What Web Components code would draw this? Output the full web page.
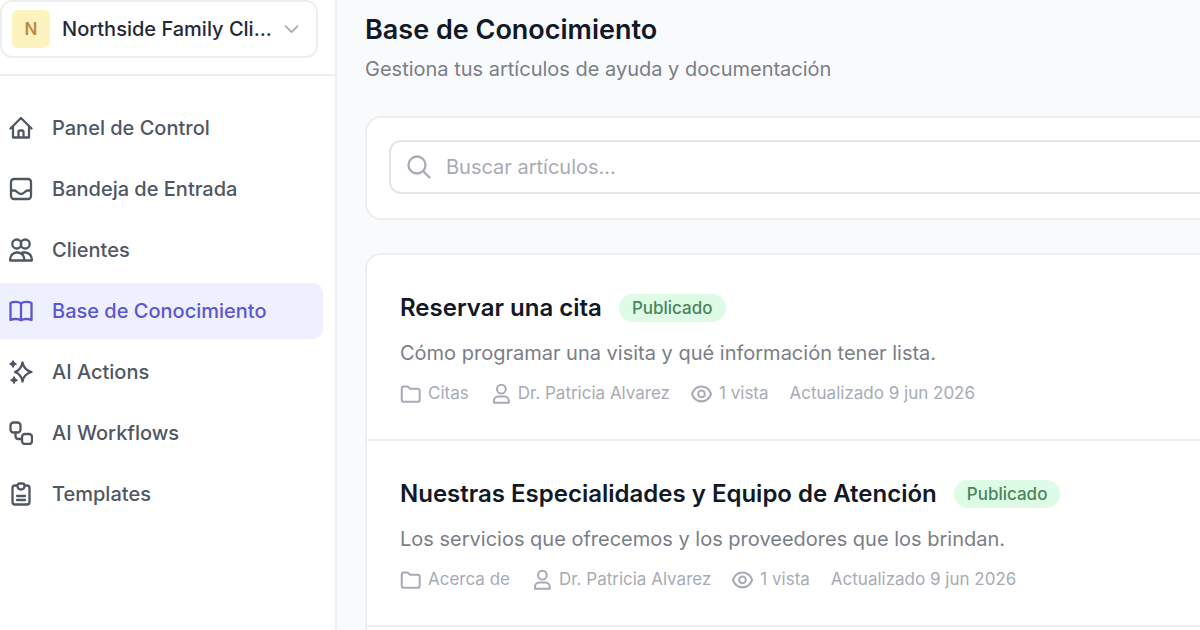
<!DOCTYPE html>
<html lang="es">
<head>
<meta charset="utf-8">
<meta name="viewport" content="width=device-width, initial-scale=1">
<title>Base de Conocimiento</title>
<style>
  html, body { margin: 0; height: 100%; }
  body {
    --line: #eceef1;
    --ink: #111827;
    --body: #4f5763;
    --muted: #7a7e87;
    --faint: #a8abb5;
    --accent: #5d57cf;
    --accent-soft: #eef0ff;
    font-family: Inter, "Liberation Sans", sans-serif;
    font-size: 20px;
    line-height: 28px;
    color: var(--ink);
    background: #f8fafc;
    overflow: hidden;
  }
</style>
</head>
<body>
<app-shell>
  <side-bar slot="side">
    <workspace-switcher slot="head" initial="N">Northside Family Cli...</workspace-switcher>
    <nav-item icon="home">Panel de Control</nav-item>
    <nav-item icon="inbox">Bandeja de Entrada</nav-item>
    <nav-item icon="users">Clientes</nav-item>
    <nav-item icon="book" active>Base de Conocimiento</nav-item>
    <nav-item icon="sparkles">AI Actions</nav-item>
    <nav-item icon="flow">AI Workflows</nav-item>
    <nav-item icon="clipboard">Templates</nav-item>
  </side-bar>
  <page-header>
    Base de Conocimiento
    <span slot="subtitle">Gestiona tus artículos de ayuda y documentación</span>
  </page-header>
  <search-panel placeholder="Buscar artículos..."></search-panel>
  <article-list>
    <article-row category="Citas" author="Dr. Patricia Alvarez" views="1 vista" updated="Actualizado 9 jun 2026">
      <span slot="title">Reservar una cita</span>
      <status-badge slot="status">Publicado</status-badge>
      Cómo programar una visita y qué información tener lista.
    </article-row>
    <article-row category="Acerca de" author="Dr. Patricia Alvarez" views="1 vista" updated="Actualizado 9 jun 2026">
      <span slot="title">Nuestras Especialidades y Equipo de Atención</span>
      <status-badge slot="status">Publicado</status-badge>
      Los servicios que ofrecemos y los proveedores que los brindan.
    </article-row>
  </article-list>
</app-shell>

<script>
const ICONS = {
  home: '<path d="M1.500 12.500 12 2l10.500 10.500M4 10.500v11h16v-11M9.500 21.500V16q0-1.500 1.500-1.500h2q1.500 0 1.500 1.500v5.500"/>',
  inbox: '<rect x="2" y="2" width="20" height="20" rx="3"/><path d="M2 13.500h3.500c2.500 0 3 3.500 6.500 3.500s4-3.500 6.500-3.500H22"/>',
  users: '<circle cx="7.800" cy="6" r="4.500"/><circle cx="16.200" cy="6" r="4.500"/><path d="M1.200 22.500v-1.500c0-3 2.800-6.500 6.300-6.500h1.500c3.500 0 6.300 3.500 6.300 6.500v1.500zM13.500 14.500h3c3.500 0 6.300 3.500 6.300 6.500v1.500h-7.500"/>',
  book: '<path d="M12 4.500C9.500 2.500 4.500 2.500 1.500 4v17c3-1.500 8-1.300 10.500.3 2.500-1.600 7.500-1.800 10.500-.3V4C19.500 2.500 14.500 2.500 12 4.500zV21"/>',
  sparkles: '<path d="M13.500 2.500c1 5.500 3.500 8 9 9.500-5.500 1.500-8 4-9 9.500-1-5.500-3.500-8-7.500-9.500 4-1.500 6.500-4 7.500-9.500z"/><path fill="currentColor" stroke-width="1.500" d="M4 1c.4 2 1 2.600 3 3-2 .4-2.600 1-3 3-.4-2-1-2.600-3-3 2-.4 2.600-1 3-3zM5 17c.4 2.200 1 2.800 3 3.200-2 .4-2.600 1-3 3-.4-2-1-2.600-3-3 2-.4 2.600-1 3-3.200z"/>',
  flow: '<rect x="1.500" y="1.500" width="10" height="10" rx="3"/><rect x="13" y="13" width="10" height="10" rx="3"/><path d="M6.500 11.500V15q0 3 3 3H13"/>',
  clipboard: '<path d="M8 3.500H6q-2.500 0-2.500 2.500v14q0 2.500 2.500 2.500h12q2.500 0 2.500-2.500V6q0-2.500-2.500-2.500h-2"/><path d="M8.500 3.500q0-2 2-2h3q2 0 2 2c0 2-1 4-3.500 4s-3.500-2-3.500-4zM8 14h8M8 18h8"/>',
  search: '<circle cx="10" cy="10" r="8.500"/><path d="m16.500 16.500 6 6"/>',
  folder: '<path d="M2 19V6.500q0-2.500 2.500-2.500H8q1 0 1.700.8L11.500 6.500H20q2.500 0 2.500 2.500V19q0 2.500-2.500 2.500H4.500Q2 21.500 2 19z"/>',
  user: '<circle cx="13" cy="7" r="5"/><path d="M4.500 22.500V20.500c0-3.500 3-5 5.500-5h6c2.500 0 5.500 1.500 5.500 5v2z"/>',
  eye: '<path d="M1 12.500C3 7 7 4 12 4s9 3 11 8.500C21 18 17 21 12 21S3 18 1 12.500z"/><circle cx="12" cy="12.500" r="3.800"/>',
  chevron: '<path d="m2.500 7.500 9.500 9.500 9.500-9.500"/>'
};
const icon = (name, stroke = 2.3) =>
  `<svg viewBox="0 0 24 24" fill="none" stroke="currentColor" stroke-width="${stroke}" stroke-linecap="round" stroke-linejoin="round" aria-hidden="true">${ICONS[name]}</svg>`;

const define = (tag, render) => customElements.define(tag, class extends HTMLElement {
  connectedCallback() {
    if (this.shadowRoot) return;
    this.attachShadow({ mode: 'open' }).innerHTML = render(this);
  }
});

define('app-shell', () => `
  <style>
    :host { display: grid; grid-template-columns: 337px minmax(0, 1fr); min-height: 100%; }
    main { display: flex; flex-direction: column; padding: 12px 0 0 28px; }
  </style>
  <slot name="side"></slot>
  <main><slot></slot></main>`);

define('side-bar', () => `
  <style>
    :host { display: block; box-sizing: border-box; background: #fff; border-right: 2px solid var(--line); }
    header { padding: 0 17px 16px 0; border-bottom: 2px solid var(--line); }
    nav { display: flex; flex-direction: column; gap: 5px; padding: 24px 12px 24px 0; }
  </style>
  <header><slot name="head"></slot></header>
  <nav aria-label="Principal"><slot></slot></nav>`);

define('workspace-switcher', el => `
  <style>
    :host { display: block; }
    button {
      display: flex; align-items: center; gap: 12px; box-sizing: border-box;
      width: 100%; height: 58px; padding: 0 17px 0 10px;
      font: 500 20px/28px Inter, "Liberation Sans", sans-serif; color: #1f2937; text-align: left;
      background: #fff; border: 2px solid var(--line); border-radius: 12px;
    }
    .mark {
      display: grid; place-items: center; flex: none; width: 38px; height: 38px;
      font-size: 17px; font-weight: 600; line-height: 24px; color: #bf8a3e;
      background: #fdf3bf; border-radius: 6px;
    }
    .name { flex: 1; white-space: nowrap; }
    svg { width: 18px; height: 18px; color: #a5a9b4; }
  </style>
  <button type="button">
    <span class="mark">${el.getAttribute('initial')}</span>
    <span class="name"><slot></slot></span>
    ${icon('chevron', 2.6)}
  </button>`);

define('nav-item', el => `
  <style>
    :host { display: block; }
    a {
      display: flex; align-items: center; gap: 19px; height: 56px; padding: 0 9px;
      font-weight: 500; color: var(--body); text-decoration: none; border-radius: 0 10px 10px 0;
    }
    svg { flex: none; width: 24px; height: 24px; }
    :host([active]) a { color: var(--accent); background: var(--accent-soft); }
  </style>
  <a href="#"${el.hasAttribute('active') ? ' aria-current="page"' : ''}>${icon(el.getAttribute('icon'))}<slot></slot></a>`);

define('page-header', () => `
  <style>
    :host { display: block; margin-bottom: 33px; }
    h1 { margin: 0 0 7px; font-size: 27px; font-weight: 600; line-height: 36px; }
    p { margin: 0; line-height: 28px; color: var(--muted); }
  </style>
  <h1><slot></slot></h1>
  <p><slot name="subtitle"></slot></p>`);

define('search-panel', el => `
  <style>
    :host {
      display: block; margin-bottom: 33px; padding: 22px 0 24px 22px; background: #fff;
      border: 2px solid var(--line); border-right: 0; border-radius: 16px 0 0 16px;
    }
    label {
      display: flex; align-items: center; gap: 15px; box-sizing: border-box; height: 54px; padding: 0 16px;
      border: 2px solid #e3e5e9; border-right: 0; border-radius: 12px 0 0 12px; color: var(--faint);
    }
    svg { flex: none; width: 24px; height: 24px; }
    input {
      flex: 1; min-width: 0; padding: 0; border: 0; outline: 0; background: none;
      font: 400 20px/28px Inter, "Liberation Sans", sans-serif; color: var(--ink);
    }
    input::placeholder { color: var(--faint); opacity: 1; }
  </style>
  <label>${icon('search')}<input type="text" aria-label="Buscar artículos" placeholder="${el.getAttribute('placeholder')}"></label>`);

define('article-list', () => `
  <style>
    :host {
      display: block; flex: 1; background: #fff;
      border: 2px solid var(--line); border-right: 0; border-bottom: 0; border-radius: 16px 0 0 0;
    }
  </style>
  <slot></slot>`);

define('status-badge', () => `
  <style>
    :host {
      display: block; padding: 2px 13px; font-size: 17px; font-weight: 500; line-height: 24px;
      color: #4a855c; background: #defbe6; border-radius: 14px;
    }
  </style>
  <slot></slot>`);

define('article-row', el => `
  <style>
    :host { display: block; padding: 35px 33px 34px; border-bottom: 2px solid var(--line); }
    header { display: flex; align-items: center; gap: 17px; margin-bottom: 13px; }
    h2 { margin: 0; font-size: 24px; font-weight: 600; line-height: 36px; }
    p { margin: 0 0 14px; line-height: 28px; color: var(--muted); }
    ul { display: flex; gap: 21px; margin: 0; padding: 0; list-style: none; font-size: 17px; line-height: 24px; color: var(--faint); }
    li { display: flex; align-items: center; gap: 7px; }
    svg { flex: none; width: 21px; height: 21px; }
  </style>
  <header><h2><slot name="title"></slot></h2><slot name="status"></slot></header>
  <p><slot></slot></p>
  <ul>
    <li>${icon('folder')}${el.getAttribute('category')}</li>
    <li>${icon('user')}${el.getAttribute('author')}</li>
    <li>${icon('eye')}${el.getAttribute('views')}</li>
    <li>${el.getAttribute('updated')}</li>
  </ul>`);
</script>
</body>
</html>
